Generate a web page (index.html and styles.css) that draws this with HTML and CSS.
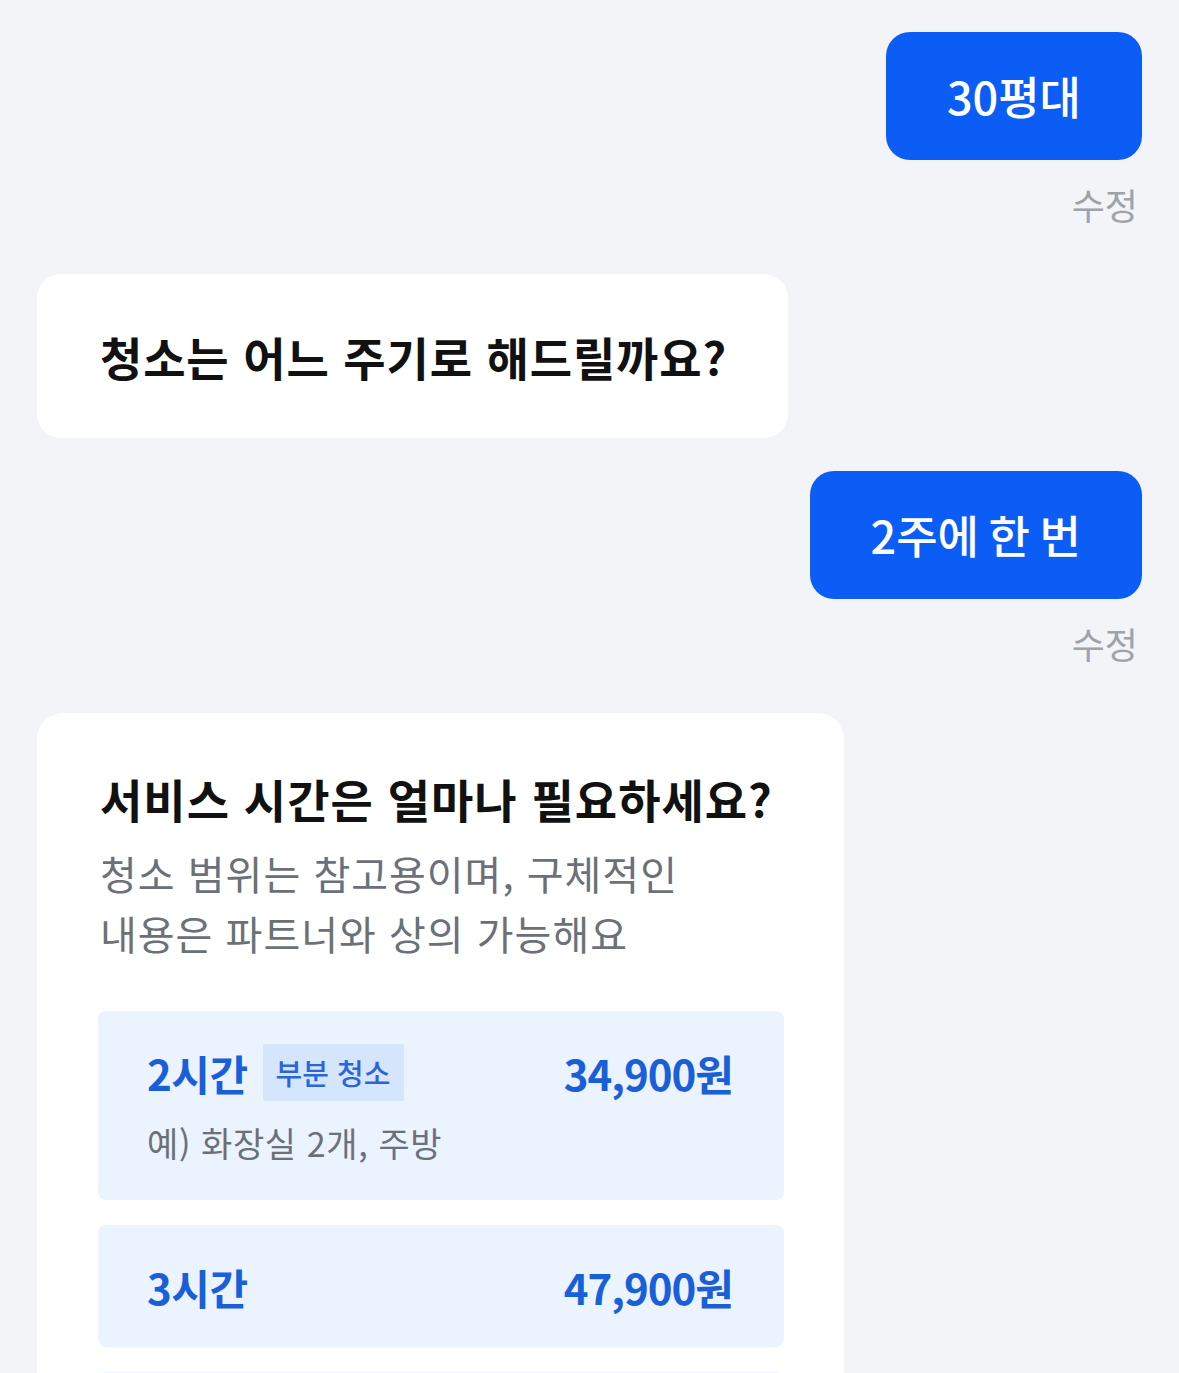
FILE: index.html
```html
<!DOCTYPE html>
<html lang="ko">
<head>
<meta charset="utf-8">
<title>청소 예약</title>
<link rel="stylesheet" href="styles.css">
</head>
<body>
<main class="chat">
  <div class="msg msg-user">
    <div class="bubble bubble-user">30평대</div>
    <button class="edit">수정</button>
  </div>
  <div class="msg msg-bot">
    <div class="bubble bubble-bot">청소는 어느 주기로 해드릴까요?</div>
  </div>
  <div class="msg msg-user">
    <div class="bubble bubble-user">2주에 한 번</div>
    <button class="edit">수정</button>
  </div>
  <section class="card">
    <h2 class="card-title">서비스 시간은 얼마나 필요하세요?</h2>
    <p class="card-sub">청소 범위는 참고용이며, 구체적인<br>내용은 파트너와 상의 가능해요</p>
    <ul class="options">
      <li class="option">
        <div class="option-row">
          <span class="option-time">2시간</span>
          <span class="badge">부분 청소</span>
          <span class="option-price">34,900원</span>
        </div>
        <div class="option-desc">예) 화장실 2개, 주방</div>
      </li>
      <li class="option">
        <div class="option-row">
          <span class="option-time">3시간</span>
          <span class="option-price">47,900원</span>
        </div>
      </li>
      <li class="option">
        <div class="option-row">
          <span class="option-time">4시간</span>
          <span class="badge">전체 청소</span>
          <span class="option-price">59,900원</span>
        </div>
        <div class="option-desc">예) 화장실 2개, 주방, 거실, 방</div>
      </li>
    </ul>
  </section>
</main>
</body>
</html>
```
FILE: styles.css
```css
* { box-sizing: border-box; }
html, body {
  margin: 0;
  padding: 0;
  background: #f2f4f8;
}
body {
  font-family: "Noto Sans CJK KR", "Noto Sans", sans-serif;
  color: #111111;
}
.chat {
  display: flex;
  flex-direction: column;
  padding: 32px 37px 40px 37px;
}
.msg {
  display: flex;
  flex-direction: column;
}
.msg-user {
  align-items: flex-end;
  margin-bottom: 46px;
}
.msg-bot {
  align-items: flex-start;
  margin-bottom: 33px;
}
.bubble {
  font-size: 45px;
  line-height: 64px;
  border-radius: 24px;
}
.bubble-user {
  background: #0c5df5;
  color: #ffffff;
  font-weight: 500;
  word-spacing: -3px;
  padding: 32px 61px 32px 61px;
}
.bubble-bot {
  background: #ffffff;
  color: #111111;
  font-size: 46px;
  font-weight: 700;
  padding: 50px 61px 50px 63px;
  letter-spacing: 0.85px;
}
.edit {
  margin-top: 20px;
  margin-right: 4px;
  padding: 0;
  border: 0;
  background: none;
  font-family: inherit;
  font-size: 36px;
  line-height: 48px;
  color: #9ea2a9;
}
.card {
  background: #ffffff;
  border-radius: 26px;
  width: 807px;
  padding: 54px 60px 40px 61px;
}
.card-title {
  margin: 0 0 14px 2px;
  font-size: 46px;
  line-height: 62px;
  font-weight: 700;
  letter-spacing: 1px;
  color: #111111;
}
.card-sub {
  margin: 0 0 48px 2px;
  font-size: 40px;
  line-height: 60px;
  color: #6c7077;
  font-weight: 400;
  letter-spacing: 1px;
}
.options {
  list-style: none;
  margin: 0;
  padding: 0;
  display: flex;
  flex-direction: column;
  gap: 25px;
}
.option {
  background: #ebf3fe;
  border-radius: 8px;
  padding: 33px 51px 32px 49px;
}
.option-row {
  display: flex;
  align-items: center;
  height: 57px;
}
.option-time {
  font-size: 42px;
  font-weight: 700;
  color: #1a5fd8;
  letter-spacing: -0.5px;
}
.badge {
  margin-left: 15px;
  background: #d5e5fc;
  color: #2a66d9;
  font-size: 29px;
  line-height: 57px;
  height: 57px;
  padding: 0 14px 0 13px;
  border-radius: 2px;
  font-weight: 500;
}
.option-price {
  margin-left: auto;
  font-size: 42px;
  font-weight: 700;
  color: #1a5fd8;
  letter-spacing: -1px;
}
.option-desc {
  margin-top: 17px;
  font-size: 34px;
  line-height: 50px;
  color: #6c7077;
  letter-spacing: 0.6px;
}
```
